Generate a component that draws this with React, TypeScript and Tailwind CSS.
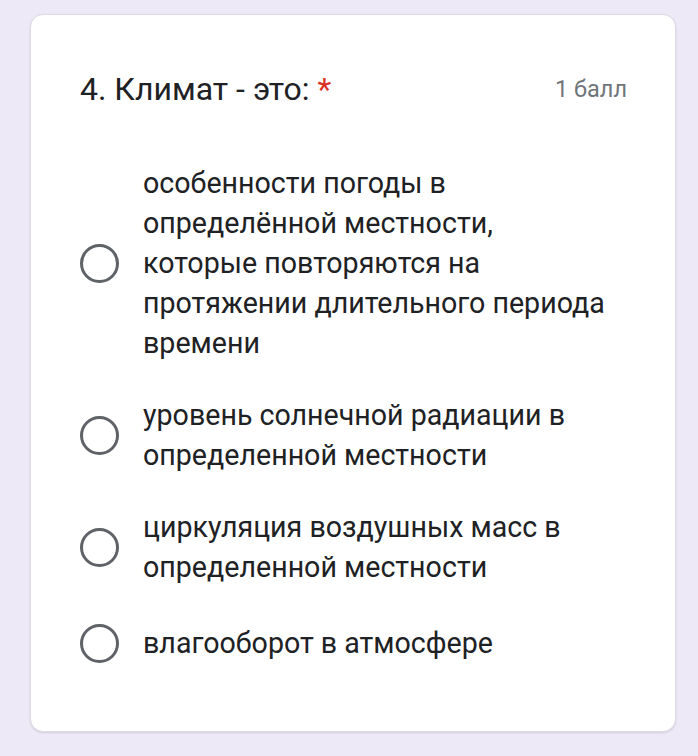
const options = [
  "особенности погоды в определённой местности, которые повторяются на протяжении длительного периода времени",
  "уровень солнечной радиации в определенной местности",
  "циркуляция воздушных масс в определенной местности",
  "влагооборот в атмосфере",
];

export default function App() {
  return (
    <main className="min-h-screen bg-[#ede9f6] pl-[30px] pr-[22px] pt-[14px] pb-[25px] font-['Roboto',sans-serif]">
      <div className="rounded-[13px] border border-[#dcdae3] bg-white pl-[49px] pr-[48px] pt-[54px] pb-[68px] shadow-[0_1px_2px_rgba(60,64,67,0.15)]">
        <div className="flex items-center justify-between">
          <h1 className="text-[32px] leading-[40px] text-[#202124]">
            4. Климат - это: <span className="text-[#d93025]">*</span>
          </h1>
          <span className="text-[23.5px] leading-[32px] text-[#70757a]">1 балл</span>
        </div>

        <div className="mt-[54px] flex flex-col gap-[32px]">
          {options.map((text, i) => (
            <label key={text} className={`flex items-center ${i === options.length - 1 ? "mt-[4px]" : ""}`}>
              <span className="h-[39px] w-[39px] shrink-0 rounded-full border-[3.5px] border-[#5f6368]" />
              <span className="ml-[24px] max-w-[466px] text-[28.6px] leading-[40px] text-[#202124]">{text}</span>
            </label>
          ))}
        </div>
      </div>
    </main>
  );
}
